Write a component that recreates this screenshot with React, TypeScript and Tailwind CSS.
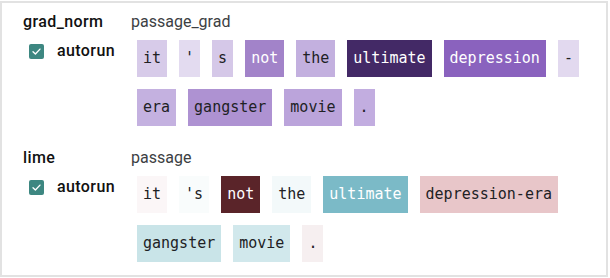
import React from 'react';

interface Token {
  text: string;
  bg: string;
  light?: boolean;
}

const gradTokens: Token[] = [
  { text: 'it', bg: 'bg-[#d7cbe9]' },
  { text: "'", bg: 'bg-[#e3dbf0]' },
  { text: 's', bg: 'bg-[#d5c8e8]' },
  { text: 'not', bg: 'bg-[#a283c9]', light: true },
  { text: 'the', bg: 'bg-[#c3b0df]' },
  { text: 'ultimate', bg: 'bg-[#432966]', light: true },
  { text: 'depression', bg: 'bg-[#8a62be]', light: true },
  { text: '-', bg: 'bg-[#e2d9ef]' },
  { text: 'era', bg: 'bg-[#c4b1e0]' },
  { text: 'gangster', bg: 'bg-[#ae92d2]' },
  { text: 'movie', bg: 'bg-[#bba4db]' },
  { text: '.', bg: 'bg-[#c2ade0]' },
];

const limeTokens: Token[] = [
  { text: 'it', bg: 'bg-[#fbf6f7]' },
  { text: "'s", bg: 'bg-[#f9fcfc]' },
  { text: 'not', bg: 'bg-[#5a2429]', light: true },
  { text: 'the', bg: 'bg-[#f3f9fa]' },
  { text: 'ultimate', bg: 'bg-[#7bbac7]', light: true },
  { text: 'depression-era', bg: 'bg-[#e8c6c9]' },
  { text: 'gangster', bg: 'bg-[#c9e4e8]' },
  { text: 'movie', bg: 'bg-[#d1e8ec]' },
  { text: '.', bg: 'bg-[#f6eff0]' },
];

const Checkbox: React.FC = () => (
  <div className="w-[15px] h-[15px] rounded-[2px] bg-[#3d8781] flex items-center justify-center">
    <svg width="11" height="11" viewBox="0 0 12 12" fill="none">
      <path d="M2.2 6.3 L4.8 8.8 L9.8 3.4" stroke="white" strokeWidth="1.5" strokeLinecap="round" strokeLinejoin="round" />
    </svg>
  </div>
);

const Section: React.FC<{ name: string; field: string; tokens: Token[] }> = ({ name, field, tokens }) => (
  <div className="flex">
    <div className="w-[108px] shrink-0">
      <div className="h-[20px] leading-[20px] text-[16px] font-medium text-[#111] tracking-[0.4px]">{name}</div>
      <div className="mt-[9px] ml-[6px] flex items-center gap-[13px] h-[20px]">
        <Checkbox />
        <span className="text-[16px] font-medium text-[#111] tracking-[0.4px]">autorun</span>
      </div>
    </div>
    <div className="flex-1">
      <div className="h-[20px] leading-[20px] text-[16px] text-[#3c4043]">{field}</div>
      <div className="mt-[8px] ml-[6px] flex flex-wrap gap-x-[12px] gap-y-[12px] w-[450px]">
        {tokens.map((t, i) => (
          <span
            key={i}
            className={`h-[37px] px-[6px] flex items-center text-[15px] whitespace-pre ${t.bg} ${t.light ? 'text-white' : 'text-[#202124]'}`}
            style={{ fontFamily: '"DejaVu Sans Mono", monospace' }}
          >
            {t.text}
          </span>
        ))}
      </div>
    </div>
  </div>
);

export default function App() {
  return (
    <div className="w-[610px] h-[278px] bg-white pt-[1px]" style={{ fontFamily: 'Roboto, "Noto Sans", sans-serif' }}>
      <div className="w-[608px] h-[276px] border-2 border-[#e2e2e2] pl-[21px] pt-[9px] flex flex-col gap-[22px]">
        <Section name="grad_norm" field="passage_grad" tokens={gradTokens} />
        <Section name="lime" field="passage" tokens={limeTokens} />
      </div>
    </div>
  );
}
